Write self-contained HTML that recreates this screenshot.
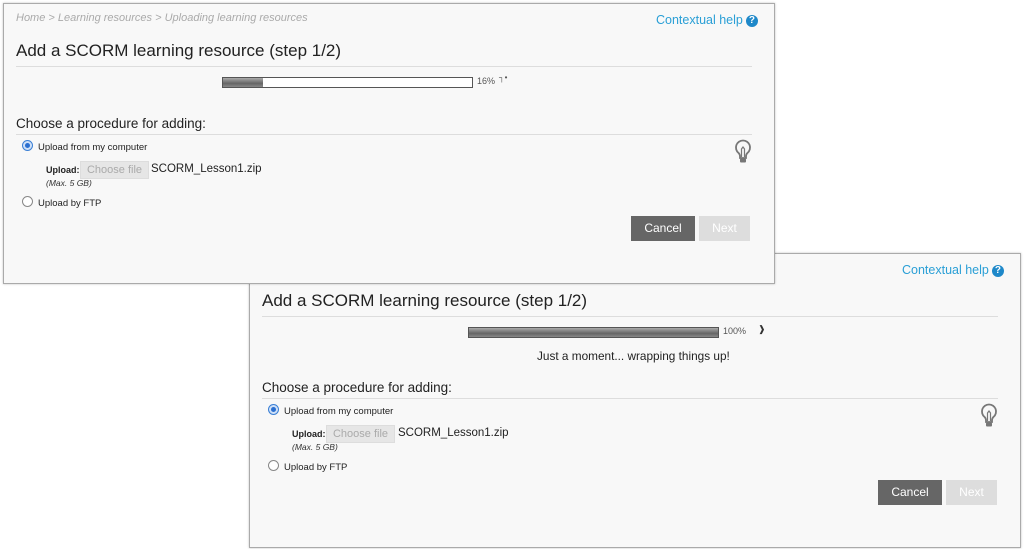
<!DOCTYPE html>
<html><head><meta charset="utf-8"><style>
body{margin:0;width:1024px;height:549px;background:#fff;position:relative;overflow:hidden;font-family:"Liberation Sans",sans-serif;}
.p{position:absolute;background:#f8f8f8;border:1px solid #aaa;box-shadow:0 0 2px rgba(0,0,0,.25);}
.a{position:absolute;white-space:nowrap;}
.bc{color:#aaa;font-style:italic;font-size:11px;}
.help{color:#2a9fd6;font-size:12.5px;}
.q{display:inline-block;width:12px;height:12px;border-radius:50%;background:#1e88c9;color:#fff;font-size:10px;font-weight:bold;text-align:center;line-height:12px;vertical-align:1px;margin-left:3px}
.t{font-size:17px;color:#222;}
.h{font-size:13.5px;color:#222}
.ln{position:absolute;height:1px;background:#ddd}
.bar{position:absolute;height:9px;border:1px solid #555;background:#fff}
.fill{position:absolute;left:0;top:0;bottom:0;background:linear-gradient(#aaa,#666 60%,#888)}
.pct{font-size:9px;color:#555}
.rad{position:absolute;width:9px;height:9px;border-radius:50%;border:1px solid #888;background:#fff}
.rad.on{border-color:#3a7fd5;background:#cfe0f7}
.rad.on:after{content:"";position:absolute;left:2px;top:2px;width:5px;height:5px;border-radius:50%;background:#2a6fd0}
.sm{font-size:9.5px;color:#222}
.up{font-size:9px;font-weight:bold;color:#222}
.fb{position:absolute;background:#e6e6e6;border:1px solid #ddd;color:#aaa;font-size:11px;text-align:center;line-height:16px}
.fn{font-size:11.5px;color:#222}
.mx{font-size:8.5px;font-style:italic;color:#333}
.btn{position:absolute;height:25px;line-height:25px;text-align:center;font-size:12px;color:#fff}
</style></head><body>

<div class="p" style="left:249px;top:253px;width:770px;height:293px;"></div>
<div class="a help" style="left:902px;top:263px">Contextual help<span class="q">?</span></div>
<div class="a t" style="left:262px;top:291px">Add a SCORM learning resource (step 1/2)</div>
<div class="ln" style="left:262px;top:316px;width:736px"></div>
<div class="bar" style="left:468px;top:327px;width:249px"><div class="fill" style="width:100%"></div></div>
<div class="a pct" style="left:723px;top:326px">100%</div>
<div class="a" style="left:758px;top:324px;font-size:9px;color:#333">&#x2771;</div>
<div class="a" style="left:537px;top:349px;font-size:11.8px;color:#222">Just a moment... wrapping things up!</div>
<div class="a h" style="left:262px;top:380px">Choose a procedure for adding:</div>
<div class="ln" style="left:262px;top:398px;width:736px"></div>
<div class="rad on" style="left:268px;top:404px"></div>
<div class="a sm" style="left:284px;top:406px">Upload from my computer</div>
<svg class="a" style="left:980px;top:403px" width="18" height="26" viewBox="0 0 18 26"><path d="M9 1.5a7 7 0 0 0-4.5 12.4c1 1 1.5 2 1.5 3.6v1.5h6v-1.5c0-1.6.5-2.6 1.5-3.6A7 7 0 0 0 9 1.5z" fill="none" stroke="#777" stroke-width="1.8"/><path d="M7.5 18V10l1.5-2 1.5 2v8" fill="none" stroke="#777" stroke-width="1.2"/><rect x="6" y="19.5" width="6" height="4" rx="1" fill="#777"/></svg>
<div class="a up" style="left:292px;top:429px">Upload:</div>
<div class="fb" style="left:326px;top:425px;width:67px;height:16px">Choose file</div>
<div class="a fn" style="left:398px;top:427px">SCORM_Lesson1.zip</div>
<div class="a mx" style="left:292px;top:442px">(Max. 5 GB)</div>
<div class="rad" style="left:268px;top:460px"></div>
<div class="a sm" style="left:284px;top:462px">Upload by FTP</div>
<div class="btn" style="left:878px;top:480px;width:64px;background:#666">Cancel</div>
<div class="btn" style="left:946px;top:480px;width:51px;background:#ddd">Next</div>

<div class="p" style="left:3px;top:3px;width:770px;height:279px;"></div>
<div class="a bc" style="left:16px;top:12px">Home &gt; Learning resources &gt; Uploading learning resources</div>
<div class="a help" style="left:656px;top:13px">Contextual help<span class="q">?</span></div>
<div class="a t" style="left:16px;top:41px">Add a SCORM learning resource (step 1/2)</div>
<div class="ln" style="left:16px;top:66px;width:736px"></div>
<div class="bar" style="left:222px;top:77px;width:249px"><div class="fill" style="width:40px"></div></div>
<div class="a pct" style="left:477px;top:76px">16%</div>
<div class="a" style="left:499px;top:73px;font-size:8px;color:#555">&#x2510;&#x2022;</div>
<div class="a h" style="left:16px;top:116px">Choose a procedure for adding:</div>
<div class="ln" style="left:16px;top:134px;width:736px"></div>
<div class="rad on" style="left:22px;top:140px"></div>
<div class="a sm" style="left:38px;top:142px">Upload from my computer</div>
<svg class="a" style="left:734px;top:139px" width="18" height="26" viewBox="0 0 18 26"><path d="M9 1.5a7 7 0 0 0-4.5 12.4c1 1 1.5 2 1.5 3.6v1.5h6v-1.5c0-1.6.5-2.6 1.5-3.6A7 7 0 0 0 9 1.5z" fill="none" stroke="#777" stroke-width="1.8"/><path d="M7.5 18V10l1.5-2 1.5 2v8" fill="none" stroke="#777" stroke-width="1.2"/><rect x="6" y="19.5" width="6" height="4" rx="1" fill="#777"/></svg>
<div class="a up" style="left:46px;top:165px">Upload:</div>
<div class="fb" style="left:80px;top:161px;width:67px;height:16px">Choose file</div>
<div class="a fn" style="left:151px;top:163px">SCORM_Lesson1.zip</div>
<div class="a mx" style="left:46px;top:178px">(Max. 5 GB)</div>
<div class="rad" style="left:22px;top:196px"></div>
<div class="a sm" style="left:38px;top:198px">Upload by FTP</div>
<div class="btn" style="left:631px;top:216px;width:64px;background:#666">Cancel</div>
<div class="btn" style="left:699px;top:216px;width:51px;background:#ddd">Next</div>
</body></html>
